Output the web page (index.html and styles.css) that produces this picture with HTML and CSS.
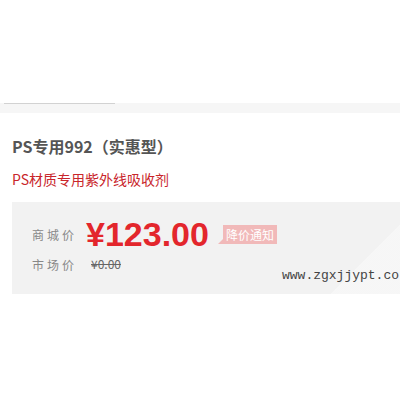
FILE: index.html
```html
<!DOCTYPE html>
<html lang="zh-CN">
<head>
    <meta charset="UTF-8">
    <title>PS专用992（实惠型）</title>
    <link rel="stylesheet" href="styles.css">
</head>
<body>
    <!-- 顶部留白 + 标签条 -->
    <div class="top-space"></div>
    <div class="tab-band">
        <div class="tab-line"></div>
    </div>

    <!-- 商品信息 -->
    <div class="product">
        <h1 class="product-title">PS专用992（实惠型）</h1>
        <div class="product-sub">PS材质专用紫外线吸收剂</div>

        <div class="price-box">
            <div class="price-row">
                <span class="price-label">商城价</span>
                <span class="price-now">¥123.00</span>
                <span class="price-notice">降价通知</span>
            </div>
            <div class="price-row market">
                <span class="price-label">市场价</span>
                <span class="price-old">¥0.00</span>
            </div>
            <div class="watermark">www.zgxjjypt.co</div>
        </div>
    </div>
</body>
</html>
```

FILE: styles.css
```css
* {
    margin: 0;
    padding: 0;
    box-sizing: border-box;
}

body {
    font-family: "Microsoft YaHei", "Noto Sans CJK SC", sans-serif;
    background: #fff;
    color: #333;
    width: 400px;
    overflow: hidden;
}

.top-space {
    height: 103px;
}

.tab-band {
    height: 10px;
    background: #f6f6f6;
}

.tab-line {
    width: 111px;
    height: 1px;
    margin-left: 4px;
    background: #d2d2d2;
}

.product {
    padding-left: 12px;
}

.product-title {
    font-size: 16px;
    font-weight: 700;
    color: #555;
    line-height: 22px;
    margin-top: 22px;
}

.product-sub {
    font-size: 14px;
    color: #c9252b;
    line-height: 20px;
    margin-top: 12px;
}

.price-box {
    position: relative;
    height: 92px;
    margin-top: 13px;
    padding: 13px 0 0 20px;
    background:
        linear-gradient(135deg, transparent 70%, rgba(255,255,255,0.35) 70%) right top / 140px 92px no-repeat,
        #f2f2f2;
    overflow: hidden;
}

.price-row {
    display: flex;
    align-items: center;
}

.price-label {
    font-size: 12px;
    color: #888;
    letter-spacing: 3px;
    width: 54px;
}

.price-now {
    font-family: "Liberation Sans", Arial, sans-serif;
    font-size: 34px;
    font-weight: 700;
    color: #e3262c;
    line-height: 38px;
}

.price-notice {
    position: relative;
    margin-left: 14px;
    padding: 0 3px;
    height: 19px;
    line-height: 19px;
    font-size: 12px;
    color: #fff;
    background: #f1b9b9;
}

.price-notice::before {
    content: "";
    position: absolute;
    left: -5px;
    bottom: 0;
    border-bottom: 5px solid #f1b9b9;
    border-left: 5px solid transparent;
}

.market {
    margin-top: 0;
}

.price-old {
    font-size: 12px;
    color: #666;
    text-decoration: line-through;
    margin-left: 5px;
    line-height: 22px;
}

.watermark {
    position: absolute;
    left: 270px;
    top: 66px;
    font-family: "Liberation Mono", "Courier New", monospace;
    font-size: 13px;
    color: #444;
    white-space: nowrap;
}
```
